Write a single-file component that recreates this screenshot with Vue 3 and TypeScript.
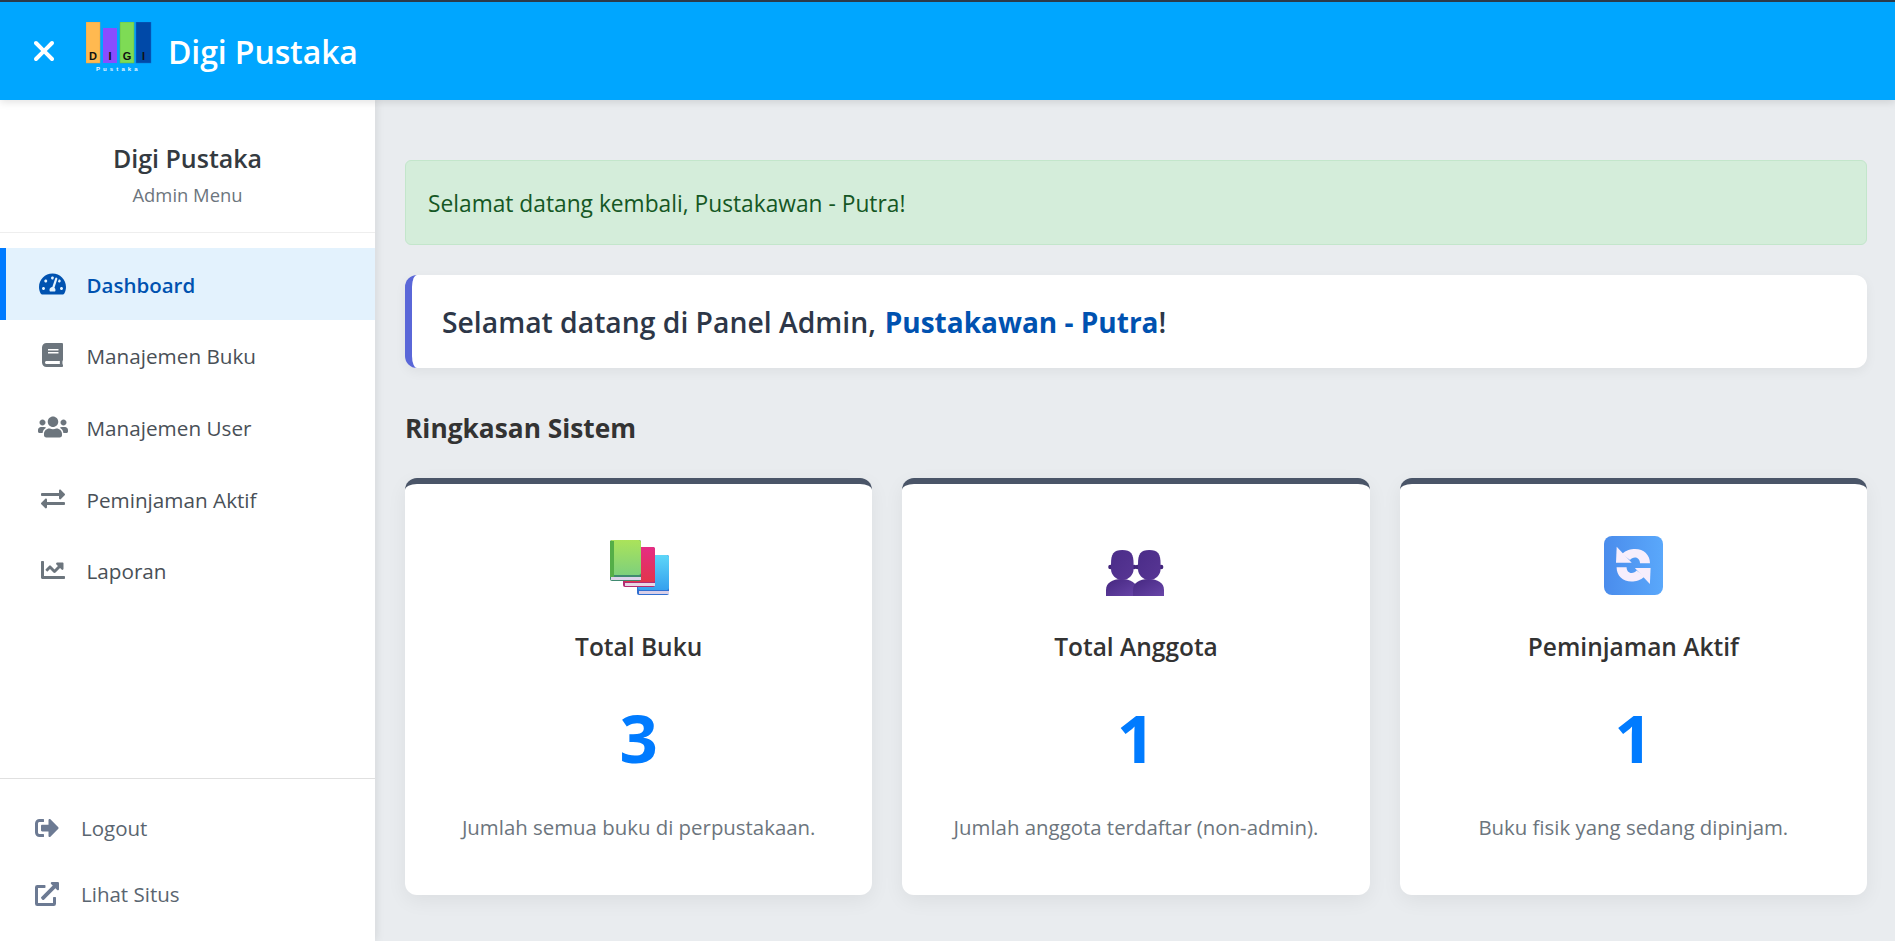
<script setup lang="ts">
interface MenuItem {
  label: string
  viewBox: string
  path: string
  active?: boolean
}

const menu: MenuItem[] = [
  {
    label: 'Dashboard',
    active: true,
    viewBox: '0 0 576 512',
    path: 'M288 32C128.94 32 0 160.94 0 320c0 52.8 14.25 102.26 39.06 144.8 5.61 9.62 16.3 15.2 27.44 15.2h443c11.14 0 21.83-5.58 27.44-15.2C561.75 422.26 576 372.8 576 320c0-159.06-128.94-288-288-288zm0 64c14.71 0 26.58 10.13 30.32 23.65-1.11 2.26-2.64 4.23-3.45 6.67l-9.22 27.67c-5.13 3.49-10.97 6.01-17.64 6.01-17.67 0-32-14.33-32-32S270.33 96 288 96zM96 384c-17.67 0-32-14.33-32-32s14.33-32 32-32 32 14.33 32 32-14.33 32-32 32zm48-160c-17.67 0-32-14.33-32-32s14.33-32 32-32 32 14.33 32 32-14.33 32-32 32zm246.77-72.41l-61.33 184C343.13 347.33 352 364.54 352 384c0 11.72-3.38 22.55-8.88 32H232.88c-5.5-9.45-8.88-20.28-8.88-32 0-33.94 26.5-61.43 59.9-63.59l61.34-184.01c4.17-12.56 17.73-19.45 30.36-15.17 12.57 4.19 19.35 17.77 15.17 30.36zm14.66 57.2l15.52-46.55c3.47-1.29 7.13-2.23 11.05-2.23 17.67 0 32 14.33 32 32s-14.33 32-32 32c-11.38-.01-20.89-6.28-26.57-15.22zM480 384c-17.67 0-32-14.33-32-32s14.33-32 32-32 32 14.33 32 32-14.33 32-32 32z',
  },
  {
    label: 'Manajemen Buku',
    viewBox: '0 0 448 512',
    path: 'M448 360V24c0-13.3-10.7-24-24-24H96C43 0 0 43 0 96v320c0 53 43 96 96 96h328c13.3 0 24-10.7 24-24v-16c0-7.5-3.5-14.3-8.9-18.7-4.2-15.4-4.2-59.3 0-74.7 5.4-4.3 8.9-11.1 8.9-18.6zM128 134c0-3.3 2.7-6 6-6h212c3.3 0 6 2.7 6 6v20c0 3.3-2.7 6-6 6H134c-3.3 0-6-2.7-6-6v-20zm0 64c0-3.3 2.7-6 6-6h212c3.3 0 6 2.7 6 6v20c0 3.3-2.7 6-6 6H134c-3.3 0-6-2.7-6-6v-20zm253.4 250H96c-17.7 0-32-14.3-32-32 0-17.6 14.4-32 32-32h285.4c-1.9 17.1-1.9 46.9 0 64z',
  },
  {
    label: 'Manajemen User',
    viewBox: '0 0 640 512',
    path: 'M96 224c35.3 0 64-28.7 64-64s-28.7-64-64-64-64 28.7-64 64 28.7 64 64 64zm448 0c35.3 0 64-28.7 64-64s-28.7-64-64-64-64 28.7-64 64 28.7 64 64 64zm32 32h-64c-17.6 0-33.5 7.1-45.1 18.6 40.3 22.1 68.9 62 75.1 109.4h66c17.7 0 32-14.3 32-32v-32c0-35.3-28.7-64-64-64zm-256 0c61.9 0 112-50.1 112-112S381.9 32 320 32 208 82.1 208 144s50.1 112 112 112zm76.8 32h-8.3c-20.8 10-43.9 16-68.5 16s-47.6-6-68.5-16h-8.3C179.6 288 128 339.6 128 403.2V432c0 26.5 21.5 48 48 48h288c26.5 0 48-21.5 48-48v-28.8c0-63.6-51.6-115.2-115.2-115.2zm-223.7-13.4C161.5 263.1 145.6 256 128 256H64c-35.3 0-64 28.7-64 64v32c0 17.7 14.3 32 32 32h65.9c6.3-47.4 34.9-87.3 75.2-109.4z',
  },
  {
    label: 'Peminjaman Aktif',
    viewBox: '0 0 512 512',
    path: 'M0 168v-16c0-13.255 10.745-24 24-24h360V80c0-21.367 25.899-32.042 40.971-16.971l80 80c9.372 9.373 9.372 24.569 0 33.941l-80 80C409.956 271.982 384 261.456 384 240v-48H24c-13.255 0-24-10.745-24-24zm488 152H128v-48c0-21.314-25.862-32.08-40.971-16.971l-80 80c-9.372 9.373-9.372 24.569 0 33.941l80 80C102.057 463.997 128 453.437 128 432v-48h360c13.255 0 24-10.745 24-24v-16c0-13.255-10.745-24-24-24z',
  },
  {
    label: 'Laporan',
    viewBox: '0 0 512 512',
    path: 'M496 384H64V80c0-8.84-7.16-16-16-16H16C7.16 64 0 71.16 0 80v336c0 17.67 14.33 32 32 32h464c8.84 0 16-7.16 16-16v-32c0-8.84-7.16-16-16-16zM464 96H345.94c-21.38 0-32.09 25.85-16.97 40.97l32.4 32.4L288 242.75l-73.37-73.37c-12.5-12.5-32.76-12.5-45.25 0l-68.69 68.69c-6.25 6.25-6.25 16.38 0 22.63l22.62 22.62c6.25 6.25 16.38 6.25 22.63 0L192 237.25l73.37 73.37c12.5 12.5 32.76 12.5 45.25 0l96-96 32.4 32.4c15.12 15.12 40.97 4.41 40.97-16.97V112c.01-8.84-7.15-16-15.99-16z',
  },
]

const footerMenu: MenuItem[] = [
  {
    label: 'Logout',
    viewBox: '0 0 512 512',
    path: 'M497 273L329 441c-15 15-41 4.5-41-17v-96H152c-13.3 0-24-10.7-24-24v-96c0-13.3 10.7-24 24-24h136V88c0-21.4 25.9-32 41-17l168 168c9.3 9.4 9.3 24.6 0 34zM192 436v-40c0-6.6-5.4-12-12-12H96c-17.7 0-32-14.3-32-32V160c0-17.7 14.3-32 32-32h84c6.6 0 12-5.4 12-12V76c0-6.6-5.4-12-12-12H96c-53 0-96 43-96 96v192c0 53 43 96 96 96h84c6.6 0 12-5.4 12-12z',
  },
  {
    label: 'Lihat Situs',
    viewBox: '0 0 512 512',
    path: 'M432,320H400a16,16,0,0,0-16,16V448H64V128H208a16,16,0,0,0,16-16V80a16,16,0,0,0-16-16H48A48,48,0,0,0,0,112V464a48,48,0,0,0,48,48H400a48,48,0,0,0,48-48V336A16,16,0,0,0,432,320ZM488,0h-128c-21.37,0-32.05,25.91-17,41l35.73,35.73L135,320.37a24,24,0,0,0,0,34L157.67,377a24,24,0,0,0,34,0L435.28,133.32,471,169c15,15,41,4.5,41-17V24A24,24,0,0,0,488,0Z',
  },
]

const stats = [
  { key: 'books', title: 'Total Buku', value: 3, desc: 'Jumlah semua buku di perpustakaan.' },
  { key: 'members', title: 'Total Anggota', value: 1, desc: 'Jumlah anggota terdaftar (non-admin).' },
  { key: 'loans', title: 'Peminjaman Aktif', value: 1, desc: 'Buku fisik yang sedang dipinjam.' },
]
</script>

<template>
  <div class="app">
    <header class="topbar">
      <svg class="close-icon" viewBox="0 96 320 320" fill="currentColor">
        <path d="M310.6 150.6c12.5-12.5 12.5-32.8 0-45.3s-32.8-12.5-45.3 0L160 210.7 54.6 105.4c-12.5-12.5-32.8-12.5-45.3 0s-12.5 32.8 0 45.3L114.7 256 9.4 361.4c-12.5 12.5-12.5 32.8 0 45.3s32.8 12.5 45.3 0L160 301.3 265.4 406.6c12.5 12.5 32.8 12.5 45.3 0s12.5-32.8 0-45.3L205.3 256 310.6 150.6z" />
      </svg>
      <svg class="logo" viewBox="0 0 66 50">
        <rect x="0" y="0" width="14" height="41" fill="#ffb950" stroke="#e0a040" stroke-width="0.5" />
        <rect x="17" y="6" width="14" height="35" fill="#8a4dff" />
        <rect x="34" y="0" width="14" height="41" fill="#7edb55" stroke="#5fb53e" stroke-width="0.5" />
        <rect x="50" y="0" width="15" height="41" fill="#0049a8" stroke="#0c6fd0" stroke-width="0.5" />
        <text class="logo-letter" x="7" y="38" text-anchor="middle">D</text>
        <text class="logo-letter" x="24" y="38" text-anchor="middle">I</text>
        <text class="logo-letter" x="41" y="38" text-anchor="middle">G</text>
        <text class="logo-letter" x="57.5" y="38" text-anchor="middle">I</text>
        <text class="logo-sub" x="10" y="48.6">Pustaka</text>
      </svg>
      <h1 class="brand">Digi Pustaka</h1>
    </header>

    <div class="layout">
      <aside class="sidebar">
        <div class="sidebar-head">
          <h3>Digi Pustaka</h3>
          <p>Admin Menu</p>
        </div>
        <nav class="nav">
          <a v-for="item in menu" :key="item.label" class="nav-item" :class="{ active: item.active }">
            <span class="nav-icon">
              <svg :viewBox="item.viewBox" fill="currentColor"><path :d="item.path" /></svg>
            </span>
            {{ item.label }}
          </a>
        </nav>
        <div class="sidebar-foot">
          <a v-for="item in footerMenu" :key="item.label" class="foot-item">
            <svg :viewBox="item.viewBox" fill="currentColor"><path :d="item.path" /></svg>
            {{ item.label }}
          </a>
        </div>
      </aside>

      <main class="main">
        <div class="alert">Selamat datang kembali, Pustakawan - Putra!</div>
        <div class="welcome">
          <h2>Selamat datang di Panel Admin, <strong>Pustakawan - Putra</strong>!</h2>
        </div>
        <h3 class="section-title">Ringkasan Sistem</h3>
        <div class="grid">
          <section v-for="s in stats" :key="s.key" class="card">
            <div class="emoji">
              <svg v-if="s.key === 'books'" viewBox="0 0 60 60">
                <defs>
                  <linearGradient id="bookBlue" x1="0" y1="0" x2="0" y2="1"><stop offset="0" stop-color="#5dd6f8" /><stop offset="1" stop-color="#35a0ee" /></linearGradient>
                  <linearGradient id="bookRed" x1="0" y1="0" x2="0" y2="1"><stop offset="0" stop-color="#e52d84" /><stop offset="1" stop-color="#e2344a" /></linearGradient>
                  <linearGradient id="bookGreen" x1="0" y1="0" x2="0" y2="1"><stop offset="0" stop-color="#abe35a" /><stop offset="1" stop-color="#7ed07c" /></linearGradient>
                </defs>
                <g transform="translate(0 2)">
                  <rect x="28" y="17" width="32" height="40" rx="2" fill="#2f6fd0" />
                  <rect x="29" y="17" width="31" height="35" rx="2.5" fill="url(#bookBlue)" />
                  <rect x="30" y="53" width="30" height="3" fill="#d9cfe8" />
                  <rect x="14" y="9" width="32" height="40" rx="2" fill="#b52a72" />
                  <rect x="15" y="9" width="31" height="35" rx="2.5" fill="url(#bookRed)" />
                  <rect x="16" y="45" width="30" height="3" fill="#e8d5e4" />
                  <rect x="1" y="2" width="31" height="41" rx="2" fill="#3f8a70" />
                  <rect x="1" y="2" width="31" height="35" rx="2.5" fill="url(#bookGreen)" />
                  <rect x="1" y="3" width="4" height="36" fill="#55ae48" />
                  <rect x="2" y="39" width="30" height="3" fill="#dcd3ea" />
                </g>
              </svg>
              <svg v-else-if="s.key === 'members'" viewBox="0 0 60 60">
                <defs>
                  <linearGradient id="bustBody" x1="0" y1="0" x2="1" y2="1"><stop offset="0" stop-color="#452780" /><stop offset="1" stop-color="#6845a8" /></linearGradient>
                  <linearGradient id="bustHead" x1="0" y1="0" x2="1" y2="1"><stop offset="0" stop-color="#4a2c88" /><stop offset="1" stop-color="#583694" /></linearGradient>
                </defs>
                <g v-for="dx in [0, 27]" :key="dx" :transform="`translate(${dx} 0)`">
                  <path d="M0 60v-6c0-7 6-11 15.5-11s15.5 4 15.5 11v6z" fill="url(#bustBody)" />
                  <circle cx="4.4" cy="31" r="2.2" fill="#41247a" />
                  <circle cx="28.2" cy="31" r="2.2" fill="#41247a" />
                  <path d="M5 28C5 18 7.5 14 16.3 14S27.6 18 27.6 28V33c0 6-5 11-11.3 11S5 39 5 33z" fill="url(#bustHead)" />
                </g>
              </svg>
              <svg v-else viewBox="0 0 60 60">
                <defs>
                  <linearGradient id="loanBg" x1="0" y1="0" x2="1" y2="0"><stop offset="0" stop-color="#4a8cec" /><stop offset="1" stop-color="#5aa8fb" /></linearGradient>
                </defs>
                <rect x="1" y="0" width="59" height="59" rx="8" fill="url(#loanBg)" />
                <g fill="#f7eefc">
                  <path d="M13.7 10.7L13 26.7H28.7z" />
                  <path d="M19 18C23 14 28 13 32 13C41 13 47 19 47 27.3H37C37 24 35 21.5 32 21.5C30 21.5 28 22.5 27 24z" />
                </g>
                <g fill="#f7eefc" transform="rotate(180 30.3 29.3)">
                  <path d="M13.7 10.7L13 26.7H28.7z" />
                  <path d="M19 18C23 14 28 13 32 13C41 13 47 19 47 27.3H37C37 24 35 21.5 32 21.5C30 21.5 28 22.5 27 24z" />
                </g>
              </svg>
            </div>
            <h4>{{ s.title }}</h4>
            <div class="value">{{ s.value }}</div>
            <p>{{ s.desc }}</p>
          </section>
        </div>
      </main>
    </div>
  </div>
</template>

<style>
html, body {
  margin: 0;
  padding: 0;
}
</style>

<style scoped>
.app {
  height: 100vh;
  display: flex;
  flex-direction: column;
  overflow: hidden;
  background: #e9ecef;
  font-family: "Open Sans", "Noto Sans", sans-serif;
  color: #343a40;
}

.topbar {
  height: 100px;
  box-sizing: border-box;
  flex-shrink: 0;
  display: flex;
  align-items: center;
  padding-left: 34px;
  background: #00a6ff;
  border-top: 2px solid #2b3a4a;
  color: #fff;
  box-shadow: 0 2px 8px rgba(0, 0, 0, 0.12);
  position: relative;
  z-index: 2;
}

.close-icon {
  width: 20px;
  height: 20px;
}

.logo {
  width: 66px;
  height: 50px;
  margin-left: 32px;
  margin-top: -8px;
}

.logo-letter {
  font: 700 11px "Liberation Sans", sans-serif;
  fill: #111;
}

.logo-sub {
  font: 700 6px "Liberation Sans", sans-serif;
  letter-spacing: 3.1px;
  fill: #e6f6ff;
}

.brand {
  margin: 0 0 0 16px;
  font-size: 32px;
  font-weight: 600;
  letter-spacing: -0.1px;
}

.layout {
  flex: 1;
  display: flex;
  min-height: 0;
}

.sidebar {
  width: 375px;
  flex-shrink: 0;
  display: flex;
  flex-direction: column;
  background: #fff;
  box-shadow: 2px 0 8px rgba(0, 0, 0, 0.08);
}

.sidebar-head {
  height: 133px;
  box-sizing: border-box;
  padding-top: 42px;
  text-align: center;
  border-bottom: 1px solid #eee;
}

.sidebar-head h3 {
  margin: 0;
  font-size: 25px;
  line-height: 32px;
  font-weight: 600;
  color: #343a40;
}

.sidebar-head p {
  margin: 9px 0 0;
  font-size: 18.4px;
  line-height: 24px;
  color: #6c757d;
}

.nav {
  padding-top: 15px;
  display: flex;
  flex-direction: column;
}

.nav-item {
  height: 71.6px;
  display: flex;
  align-items: center;
  box-sizing: border-box;
  padding-left: 34px;
  padding-top: 2px;
  border-left: 6px solid transparent;
  font-size: 20.7px;
  color: #495057;
}

.nav-icon {
  width: 36px;
  display: flex;
  justify-content: center;
  margin-right: 16px;
  margin-left: -5.5px;
  margin-top: -2px;
  color: #6c757d;
}

.nav-icon svg {
  height: 24px;
  max-width: 32px;
}

.nav-item.active {
  background: #e3f2fd;
  border-left-color: #007bff;
  color: #0052b0;
  font-weight: 600;
  font-size: 20.5px;
}

.nav-item.active .nav-icon {
  color: #0052b0;
}

.sidebar-foot {
  margin-top: auto;
  border-top: 1px solid #e0e0e0;
  padding: 16px 0 14px;
}

.foot-item {
  height: 66px;
  display: flex;
  align-items: center;
  padding-left: 35px;
  font-size: 20.5px;
  color: #5a6570;
}

.foot-item svg {
  width: 24px;
  height: 24px;
  margin-right: 22px;
  color: #6c7a93;
}

.main {
  flex: 1;
  min-width: 0;
  padding: 60px 28px 0 30px;
}

.alert {
  height: 85px;
  box-sizing: border-box;
  display: flex;
  align-items: center;
  padding: 2px 22px 0;
  border: 1px solid #c3e6cb;
  border-radius: 6px;
  background: #d4edda;
  color: #155724;
  font-size: 22.75px;
}

.welcome {
  height: 93px;
  margin-top: 30px;
  box-sizing: border-box;
  display: flex;
  align-items: center;
  padding-left: 30px;
  border-left: 7px solid #5a67d8;
  border-radius: 12px;
  background: #fff;
  box-shadow: 0 4px 12px rgba(0, 0, 0, 0.05);
}

.welcome h2 {
  margin: 0;
  font-size: 28.3px;
  font-weight: 600;
  color: #2d3748;
}

.welcome strong {
  margin-left: 1.5px;
  font-size: 28px;
  font-weight: 700;
  color: #0052b0;
}

.section-title {
  margin: 43px 0 33px;
  font-size: 26.3px;
  line-height: 34px;
  font-weight: 700;
  color: #333;
}

.grid {
  display: grid;
  grid-template-columns: repeat(3, 1fr);
  gap: 30px;
}

.card {
  height: 417px;
  box-sizing: border-box;
  padding: 52px 20px 0;
  text-align: center;
  border-top: 6px solid #4a5568;
  border-radius: 12px;
  background: #fff;
  box-shadow: 0 6px 20px rgba(0, 0, 0, 0.06);
}

.emoji {
  height: 60px;
  display: flex;
  justify-content: center;
}

.emoji svg {
  width: 60px;
  height: 60px;
}

.card h4 {
  margin: 34px 0 0;
  font-size: 24.5px;
  line-height: 34px;
  font-weight: 600;
  color: #333;
}

.value {
  margin-top: 28px;
  font-size: 67px;
  line-height: 90px;
  font-weight: 700;
  color: #007bff;
}

.card p {
  margin: 31px 0 0;
  font-size: 20.4px;
  line-height: 28px;
  color: #6c757d;
}
</style>
